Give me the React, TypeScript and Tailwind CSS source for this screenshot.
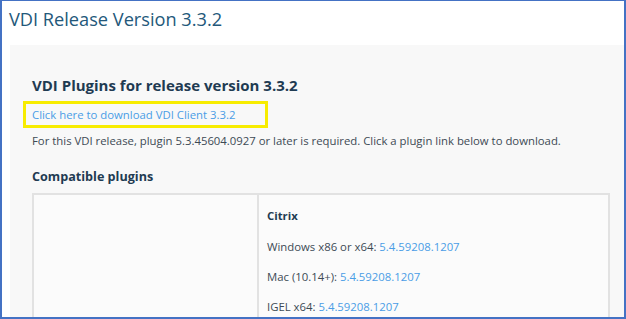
import React from "react";

export default function App() {
  return (
    <div
      className="w-[626px] h-[319px] overflow-hidden bg-white border-t border-x-2 border-b-2 border-[#4472c4] flex flex-col"
      style={{ fontFamily: '"Open Sans", "Liberation Sans", sans-serif' }}
    >
      <div className="h-[44px] shrink-0 pl-[7px] pt-[6px]">
        <h1 className="text-[18.2px] leading-[24px] text-[#23587a]">VDI Release Version 3.3.2</h1>
      </div>
      <div className="flex-1 ml-[8px] bg-[#f8f8f8] pl-[22px] pr-[14px] pt-[30px]">
        <h2 className="text-[15px] leading-[20px] font-bold text-[#1f3b52]">
          VDI Plugins for release version 3.3.2
        </h2>
        <div className="mt-[6px] ml-[-9px] w-[245px] h-[27px] border-[3px] border-[#f7ec00] pl-[6px] flex items-center">
          <span className="text-[11.35px] text-[#4a9de6]">Click here to download VDI Client 3.3.2</span>
        </div>
        <p className="mt-[5px] text-[11.35px] leading-[16px] text-[#3d4a55]">
          For this VDI release, plugin 5.3.45604.0927 or later is required. Click a plugin link below to download.
        </p>
        <h3 className="mt-[19px] text-[12.6px] leading-[18px] font-bold text-[#1f3b52]">Compatible plugins</h3>
        <div className="mt-[7px] border-2 border-[#e2e2e2] bg-[#fbfbfb] flex h-[200px]">
          <div className="w-[225px] border-r-2 border-[#e2e2e2]" />
          <div className="flex-1 pl-[8px] pt-[13px] text-[11.35px] leading-[16px] text-[#3d4a55]">
            <div className="font-bold text-[#1f3b52]">Citrix</div>
            <div className="mt-[15px]">
              Windows x86 or x64: <span className="text-[#4a9de6]">5.4.59208.1207</span>
            </div>
            <div className="mt-[14px]">
              Mac (10.14+): <span className="text-[#4a9de6]">5.4.59208.1207</span>
            </div>
            <div className="mt-[14px]">
              IGEL x64: <span className="text-[#4a9de6]">5.4.59208.1207</span>
            </div>
          </div>
        </div>
      </div>
    </div>
  );
}
